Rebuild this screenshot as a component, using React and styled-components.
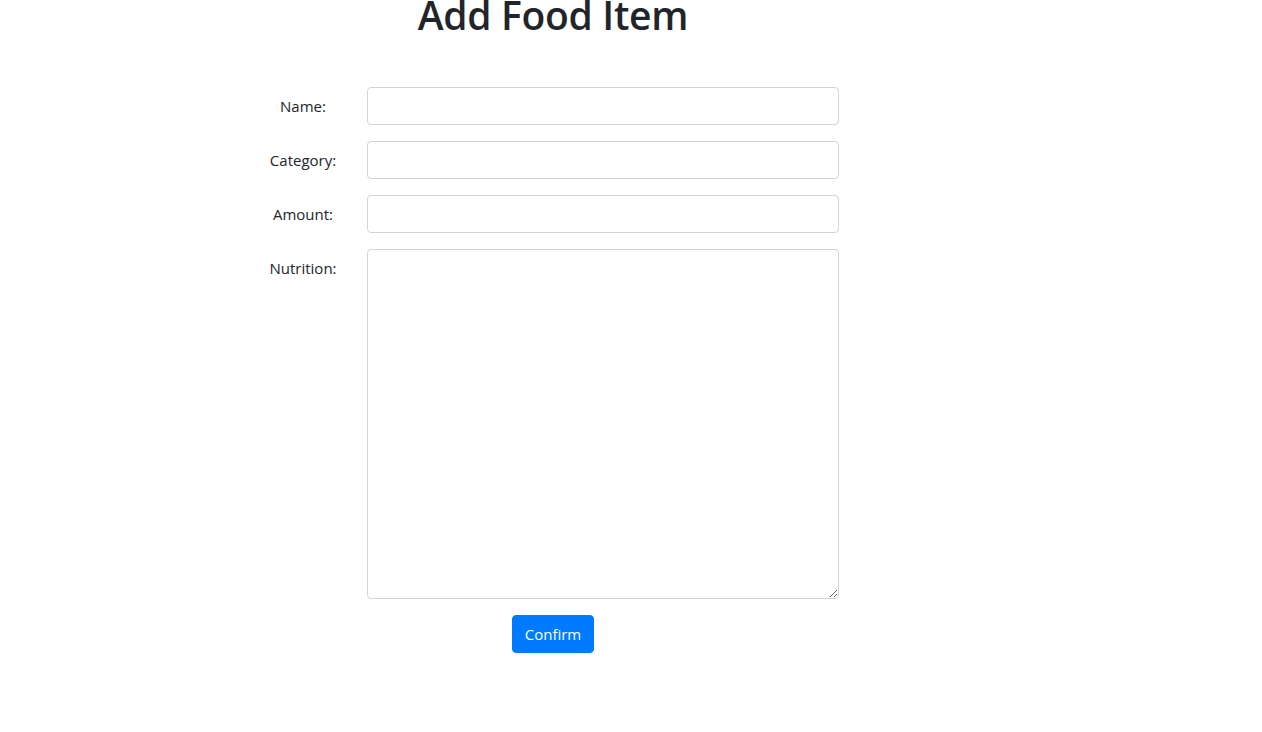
import React from 'react';
import styled, { createGlobalStyle } from 'styled-components';

const GlobalStyle = createGlobalStyle`
  body {
    margin: 0;
    background: #fff;
    color: #212529;
    font-family: "Open Sans", "Noto Sans", sans-serif;
    font-size: 16px;
    line-height: 1.5;
  }
  *, *::before, *::after {
    box-sizing: border-box;
  }
`;

const Page = styled.div`
  width: 600px;
  margin-left: 253px;
  display: flex;
  flex-direction: column;
  align-items: center;
`;

const Title = styled.h1`
  margin: -8px 0 48px;
  font-size: 39px;
  font-weight: 600;
  line-height: 1.2;
  letter-spacing: -0.3px;
`;

const Form = styled.form`
  width: 100%;
  display: flex;
  flex-direction: column;
  align-items: center;
`;

const Row = styled.div`
  width: 100%;
  display: grid;
  grid-template-columns: 100px 1fr;
  column-gap: 14px;
  padding-right: 14px;
  margin-bottom: 16px;
`;

const Label = styled.label`
  padding: 7px 0;
  text-align: center;
  font-size: 15px;
  line-height: 24px;
`;

const fieldStyles = `
  display: block;
  width: 100%;
  padding: 6px 12px;
  font-family: inherit;
  font-size: 16px;
  line-height: 24px;
  color: #495057;
  background: #fff;
  border: 1px solid #ced4da;
  border-radius: 4px;
  outline: none;
`;

const Input = styled.input`
  ${fieldStyles}
  height: 38px;
`;

const TextArea = styled.textarea`
  ${fieldStyles}
  height: 350px;
  resize: vertical;
`;

const Button = styled.button`
  height: 38px;
  padding: 6px 12px;
  font-family: inherit;
  font-size: 15px;
  line-height: 24px;
  color: #fff;
  background: #007bff;
  border: 1px solid #007bff;
  border-radius: 4px;
  cursor: pointer;
`;

const fields = [
  { id: 'name', label: 'Name:' },
  { id: 'category', label: 'Category:' },
  { id: 'amount', label: 'Amount:' },
];

export default function App() {
  return (
    <>
      <GlobalStyle />
      <Page>
        <Title>Add Food Item</Title>
        <Form onSubmit={(e) => e.preventDefault()}>
          {fields.map((f) => (
            <Row key={f.id}>
              <Label htmlFor={f.id}>{f.label}</Label>
              <Input id={f.id} type="text" />
            </Row>
          ))}
          <Row>
            <Label htmlFor="nutrition">Nutrition:</Label>
            <TextArea id="nutrition" />
          </Row>
          <Button type="submit">Confirm</Button>
        </Form>
      </Page>
    </>
  );
}
